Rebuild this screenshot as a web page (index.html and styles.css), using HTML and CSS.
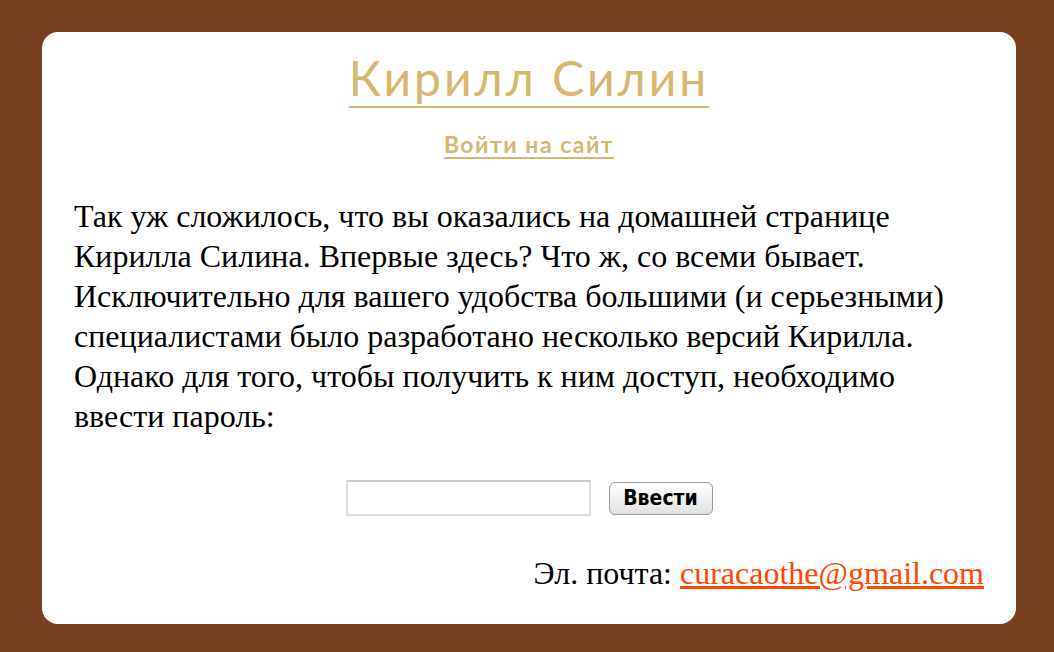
FILE: index.html
```html
<!DOCTYPE html>
<html lang="ru">
<head>
<meta charset="utf-8">
<title>Кирилл Силин</title>
<link rel="stylesheet" href="styles.css">
</head>
<body>
<div class="card">
  <header class="head">
    <h1 class="title"><a href="#">Кирилл Силин</a></h1>
    <a class="login" href="#">Войти на сайт</a>
  </header>
  <p class="intro">Так уж сложилось, что вы оказались на домашней странице Кирилла Силина. Впервые здесь? Что ж, со всеми бывает. Исключительно для вашего удобства большими (и серьезными) специалистами было разработано несколько версий Кирилла. Однако для того, чтобы получить к ним доступ, необходимо ввести пароль:</p>
  <form class="pass" onsubmit="return false">
    <input class="pass-input" type="password">
    <button class="pass-btn" type="submit">Ввести</button>
  </form>
  <p class="mail">Эл. почта: <a href="#">curacaothe@gmail.com</a></p>
</div>
</body>
</html>
```
FILE: styles.css
```css
html, body {
  margin: 0;
  background: #783f20;
}
body {
  padding: 32px 38px 28px 42px;
}
.card {
  background: #fff;
  border-radius: 16px;
  height: 592px;
  box-sizing: border-box;
  padding: 16px 32px 0 32px;
  font-family: "Liberation Serif", "Times New Roman", serif;
  font-size: 32px;
  color: #000;
}
.head {
  display: flex;
  flex-direction: column;
  align-items: center;
}
.title {
  margin: 0;
  font-family: Lato, "Open Sans", sans-serif;
  font-weight: 400;
  font-size: 48px;
  line-height: 60px;
  letter-spacing: 3px;
}
.title a, .login {
  color: #d7b66d;
  text-decoration: underline;
}
.title a {
  text-decoration-thickness: 2px;
  text-underline-offset: 10px;
}
.login {
  margin-top: 22px;
  font-family: Lato, sans-serif;
  font-weight: 700;
  font-size: 23px;
  line-height: 28px;
  letter-spacing: 1.5px;
  text-decoration-thickness: 2px;
  text-underline-offset: 4px;
}
.intro {
  margin: 38px 0 0 0;
  line-height: 40px;
}
.pass {
  margin-top: 44px;
  display: flex;
  justify-content: center;
  align-items: center;
  gap: 18px;
}
.pass-input {
  width: 245px;
  height: 36px;
  box-sizing: border-box;
  border: 2px solid #dcdcdc;
  border-top-color: #c9c9c9;
  background: #fff;
  margin: 0;
}
.pass-btn {
  width: 104px;
  height: 33px;
  box-sizing: border-box;
  border: 1px solid #9a9a9a;
  border-radius: 6px;
  background: linear-gradient(#ffffff, #f1f1f1 50%, #e2e2e2);
  font-family: "DejaVu Sans Condensed", "DejaVu Sans", sans-serif;
  font-weight: 700;
  font-size: 21px;
  color: #000;
  padding: 0;
  margin: 0;
}
.mail {
  margin: 38px 0 0 0;
  text-align: right;
  line-height: 39px;
}
.mail a {
  color: #ff4600;
  text-decoration: underline;
}
```
